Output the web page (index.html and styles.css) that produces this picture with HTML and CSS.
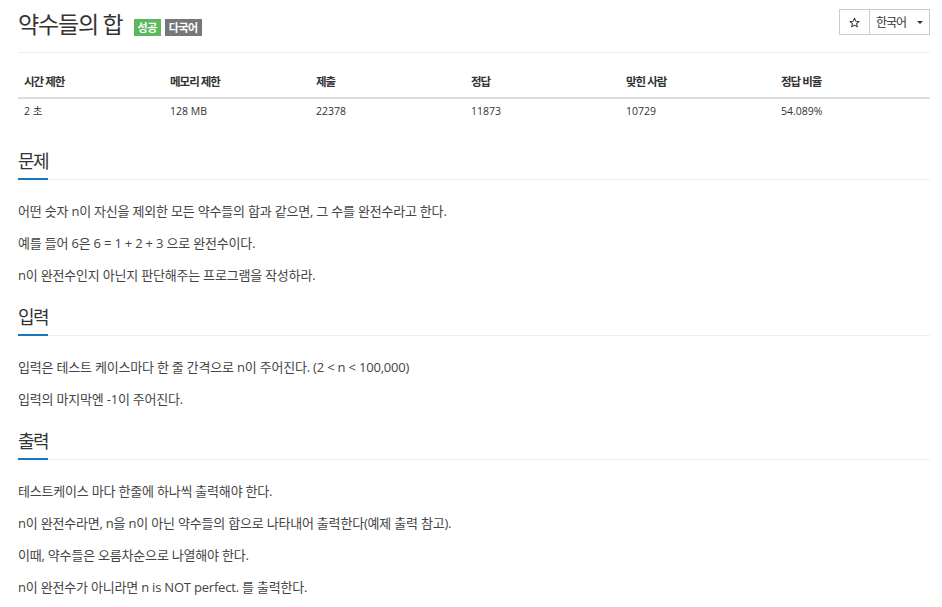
FILE: index.html
```html
<!DOCTYPE html>
<html lang="ko">
<head>
<meta charset="utf-8">
<title>약수들의 합</title>
<link rel="stylesheet" href="styles.css">
</head>
<body>
<div class="page">
  <header class="page-header">
    <h1 class="title">
      <span class="title-text">약수들의 합</span>
      <span class="badges">
        <span class="badge badge-success">성공</span>
        <span class="badge badge-gray">다국어</span>
      </span>
    </h1>
    <div class="btn-group">
      <button class="btn btn-star" type="button" aria-label="즐겨찾기">
        <svg width="11" height="11" viewBox="0 0 24 24"><path d="M12 2.5l2.9 6.6 7.1.6-5.4 4.7 1.6 7-6.2-3.7-6.2 3.7 1.6-7L2 9.7l7.1-.6z" fill="none" stroke="#333" stroke-width="2.2" stroke-linejoin="round"/></svg>
      </button>
      <button class="btn btn-lang" type="button">한국어 <span class="caret"></span></button>
    </div>
  </header>

  <table class="info-table">
    <thead>
      <tr>
        <th class="c1">시간 제한</th>
        <th class="c2">메모리 제한</th>
        <th class="c3">제출</th>
        <th class="c4">정답</th>
        <th class="c5">맞힌 사람</th>
        <th class="c6">정답 비율</th>
      </tr>
    </thead>
    <tbody>
      <tr>
        <td>2 초</td>
        <td>128 MB</td>
        <td>22378</td>
        <td>11873</td>
        <td>10729</td>
        <td>54.089%</td>
      </tr>
    </tbody>
  </table>

  <section class="section">
    <h2 class="headline"><span>문제</span></h2>
    <p>어떤 숫자 n이 자신을 제외한 모든 약수들의 합과 같으면, 그 수를 완전수라고 한다.</p>
    <p>예를 들어 6은 6 = 1 + 2 + 3 으로 완전수이다.</p>
    <p>n이 완전수인지 아닌지 판단해주는 프로그램을 작성하라.</p>
  </section>

  <section class="section">
    <h2 class="headline"><span>입력</span></h2>
    <p>입력은 테스트 케이스마다 한 줄 간격으로 n이 주어진다. (2 &lt; n &lt; 100,000)</p>
    <p>입력의 마지막엔 -1이 주어진다.</p>
  </section>

  <section class="section">
    <h2 class="headline"><span>출력</span></h2>
    <p>테스트케이스 마다 한줄에 하나씩 출력해야 한다.</p>
    <p>n이 완전수라면, n을 n이 아닌 약수들의 합으로 나타내어 출력한다(예제 출력 참고).</p>
    <p>이때, 약수들은 오름차순으로 나열해야 한다.</p>
    <p>n이 완전수가 아니라면 n is NOT perfect. 를 출력한다.</p>
  </section>
</div>
</body>
</html>
```

FILE: styles.css
```css
* { box-sizing: border-box; }

html, body {
  margin: 0;
  padding: 0;
  background: #fff;
}

body {
  font-family: "Open Sans", "Noto Sans CJK KR", sans-serif;
  color: #333;
}

.page {
  padding: 0 12px 0 18px;
}

.page-header {
  display: flex;
  justify-content: space-between;
  align-items: flex-start;
  padding-top: 9px;
  padding-bottom: 12px;
  border-bottom: 1px solid #eee;
}

.title {
  margin: 0;
  display: flex;
  align-items: center;
  font-size: 23px;
  font-weight: 400;
  line-height: 31px;
  letter-spacing: -1.2px;
  color: #333;
}

.badges {
  display: flex;
  gap: 4px;
  margin-left: 11px;
  margin-top: 5px;
  letter-spacing: -0.5px;
}

.badge {
  display: inline-block;
  height: 17px;
  line-height: 17px;
  padding: 0 4px 0 4px;
  font-size: 11px;
  font-weight: 700;
  color: #fff;
}

.badge-success { background: #5cb85c; }
.badge-gray { background: #777; }

.btn-group {
  display: flex;
  margin-top: 0;
}

.btn {
  height: 26px;
  border: 1px solid #ccc;
  background: #fff;
  font-family: inherit;
  color: #333;
  padding: 0;
  margin: 0;
  display: flex;
  align-items: center;
  justify-content: center;
}

.btn-star {
  width: 31px;
}

.btn-lang {
  width: 61px;
  margin-left: -1px;
  font-size: 12px;
  letter-spacing: -1px;
  justify-content: flex-start;
  padding-left: 6px;
}

.caret {
  display: inline-block;
  width: 0;
  height: 0;
  margin-left: 11px;
  border-top: 3px solid #333;
  border-left: 3px solid transparent;
  border-right: 3px solid transparent;
}

.info-table {
  width: 912px;
  margin-top: 14px;
  border-collapse: collapse;
  table-layout: fixed;
}

.info-table th,
.info-table td {
  text-align: left;
  padding: 8px 6px;
  line-height: 14px;
  font-size: 10.5px;
}

.info-table th {
  font-weight: 700;
  font-size: 11.5px;
  letter-spacing: -1px;
  border-bottom: 2px solid #ddd;
}

.info-table td {
  padding-top: 5px;
  color: #333;
}

.c1, .c2 { width: 146px; }
.c3, .c4, .c5, .c6 { width: 155px; }

.section {
  margin-top: 23px;
}

.section + .section {
  margin-top: 20px;
}

.headline {
  margin: 0 0 21px;
  font-size: 18px;
  font-weight: 400;
  line-height: 24px;
  letter-spacing: -1.5px;
  border-bottom: 1px dotted #ddd;
}

.headline span {
  display: inline-block;
  padding-bottom: 5px;
  margin-bottom: -1px;
  border-bottom: 2px solid #1a75bb;
}

.section p {
  margin: 0 0 12px;
  font-size: 13px;
  line-height: 20px;
  letter-spacing: -0.2px;
  color: #444;
}
```
